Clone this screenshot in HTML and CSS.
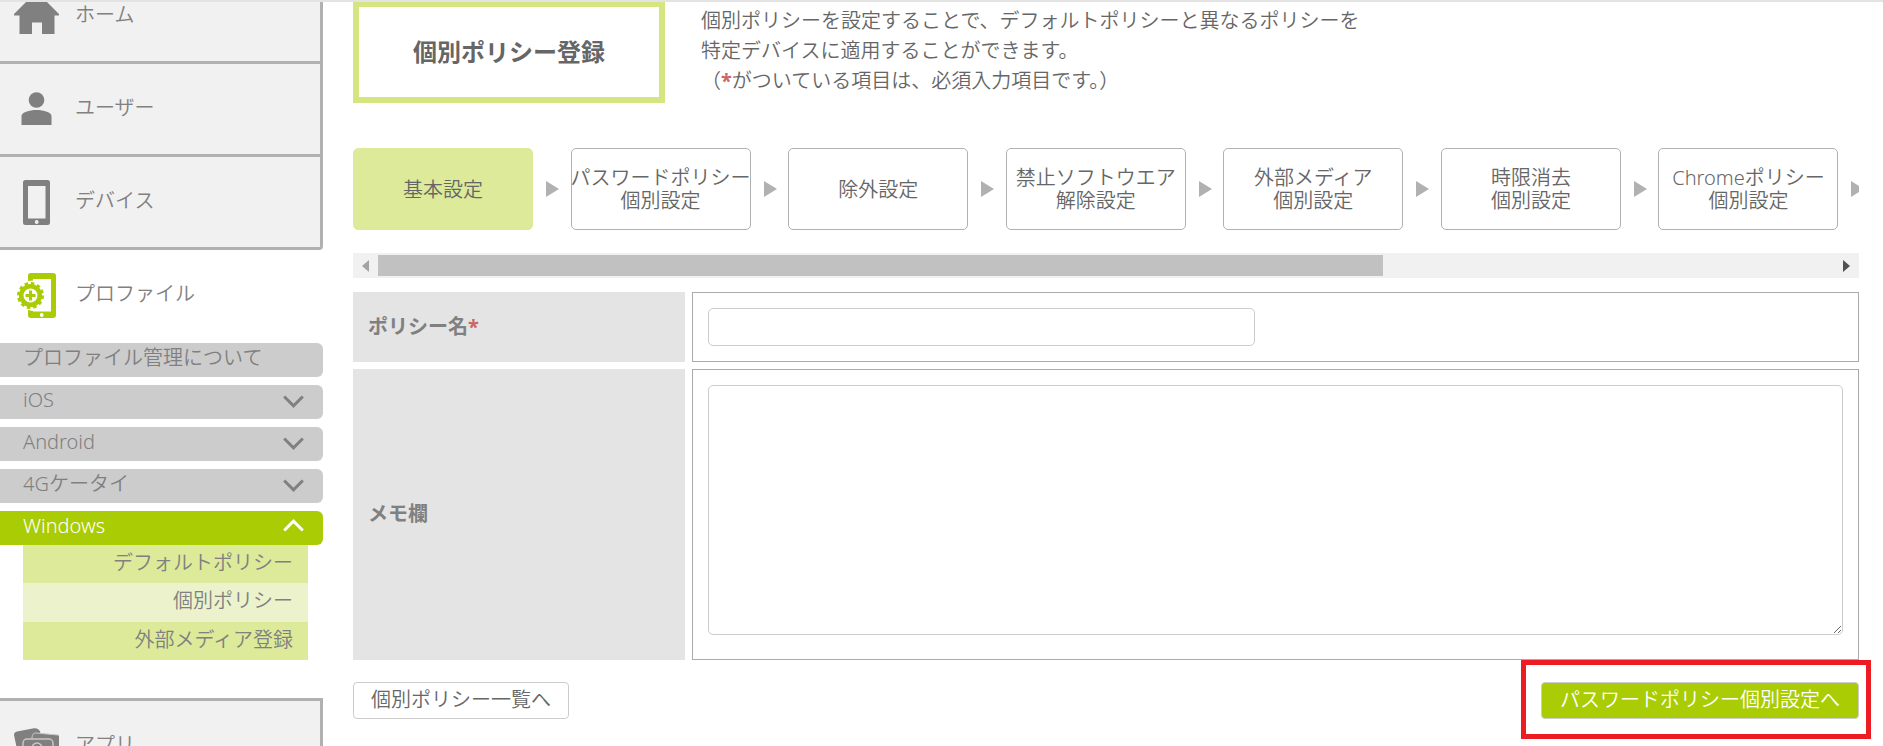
FILE: index.html
```
<!DOCTYPE html>
<html lang="ja">

<head>
    <meta charset="UTF-8">
    <meta name="viewport" content="width=device-width, initial-scale=1.0">
    <title>個別ポリシー登録</title>
    <link rel="stylesheet" href="styles.css">
</head>

<body>
    <div class="topbar"></div>
    <div class="layout">
        <nav class="sidebar">
            <a class="nav-item" href="#">
                <svg class="nav-icon" viewBox="0 0 45 45" fill="#808080">
                    <path d="M18 2h9l18 18v1.500h-4.500V40H28V28.500H18V40H5.500V21.500H0V20z"/>
                </svg>
                <span>ホーム</span>
            </a>
            <a class="nav-item" href="#">
                <svg class="nav-icon" viewBox="0 0 45 45" fill="#808080">
                    <circle cx="22.500" cy="13" r="7.800"/>
                    <path d="M7.500 38V29c0-3.500 7.500-6 15-6s15 2.500 15 6v9z"/>
                </svg>
                <span>ユーザー</span>
            </a>
            <a class="nav-item nav-item-last" href="#">
                <svg class="nav-icon" viewBox="0 0 45 45">
                    <path fill="#808080" fill-rule="evenodd" d="M11.500 0h22a2.500 2.500 0 0 1 2.500 2.500v40a2.500 2.500 0 0 1-2.500 2.500h-22A2.500 2.500 0 0 1 9 42.500v-40A2.500 2.500 0 0 1 11.500 0zM14 6v32.500h17.500V6z"/>
                    <circle cx="22.700" cy="42" r="1.900" fill="#f1f1f1"/>
                </svg>
                <span>デバイス</span>
            </a>
            <a class="nav-item nav-item-open" href="#">
                <svg class="nav-icon" viewBox="0 0 45 45">
                    <path fill="#a9cc04" d="M17 0h22a3 3 0 0 1 3 3v39a3 3 0 0 1-3 3H17a3 3 0 0 1-3-3v-5l5 1v.5h18V6H19v1.500l-5 .5V3a3 3 0 0 1 3-3z"/>
                    <circle cx="27.700" cy="42" r="1.900" fill="#fff"/>
                    <circle cx="16.500" cy="22.500" r="9.300" fill="none" stroke="#a9cc04" stroke-width="4.600"/>
                    <circle cx="16.500" cy="22.500" r="11.800" fill="none" stroke="#a9cc04" stroke-width="3.400" stroke-dasharray="3.400 2.780"/>
                    <path d="M16.500 17.500v10M11.500 22.500h10" stroke="#a9cc04" stroke-width="3"/>
                </svg>
                <span>プロファイル</span>
            </a>

            <div class="submenu">
                <a class="menu-bar" href="#">プロファイル管理について</a>
                <button class="menu-bar" type="button">iOS
                    <svg class="chevron" viewBox="0 0 21 13"><path d="M1.200 1.500l9.300 9.300 9.300-9.300"/></svg>
                </button>
                <button class="menu-bar" type="button">Android
                    <svg class="chevron" viewBox="0 0 21 13"><path d="M1.200 1.500l9.300 9.300 9.300-9.300"/></svg>
                </button>
                <button class="menu-bar" type="button">4Gケータイ
                    <svg class="chevron" viewBox="0 0 21 13"><path d="M1.200 1.500l9.300 9.300 9.300-9.300"/></svg>
                </button>
                <button class="menu-bar active" type="button">Windows
                    <svg class="chevron" viewBox="0 0 21 13"><path d="M1.200 11.500l9.300-9.300 9.300 9.300"/></svg>
                </button>
            </div>
            <div class="policy-list">
                <a href="#">デフォルトポリシー</a>
                <a class="current" href="#">個別ポリシー</a>
                <a href="#">外部メディア登録</a>
            </div>

            <a class="nav-item nav-item-first" href="#">
                <svg class="nav-icon" viewBox="0 0 45 45">
                    <path fill="#808080" d="M0 11q0-3 3-3.600L20 4.200q4-.5 6 3L33 34 6 39z"/>
                    <path fill="#808080" stroke="#c8c8c8" d="M18 14q0-5 4-5l22 2q2 0 2 3v30H18z"/>
                    <rect x="9" y="15" width="30" height="28" rx="4" fill="#808080" stroke="#c8c8c8" stroke-width="1.500"/>
                    <circle cx="23" cy="24" r="5" fill="none" stroke="#c8c8c8" stroke-width="1.500"/>
                </svg>
                <span>アプリ</span>
            </a>
        </nav>

        <main class="content">
            <header class="page-head">
                <h1>個別ポリシー登録</h1>
                <p>個別ポリシーを設定することで、デフォルトポリシーと異なるポリシーを<br>特定デバイスに適用することができます。<br>（<span class="required">*</span>がついている項目は、必須入力項目です。）</p>
            </header>

            <div class="steps">
                <ol class="step-list">
                    <li><a class="step active" href="#">基本設定</a></li>
                    <li><a class="step" href="#">パスワードポリシー<br>個別設定</a></li>
                    <li><a class="step" href="#">除外設定</a></li>
                    <li><a class="step" href="#">禁止ソフトウエア<br>解除設定</a></li>
                    <li><a class="step" href="#">外部メディア<br>個別設定</a></li>
                    <li><a class="step" href="#">時限消去<br>個別設定</a></li>
                    <li><a class="step" href="#">Chromeポリシー<br>個別設定</a></li>
                </ol>
            </div>
            <div class="scrollbar">
                <button class="scroll-btn" type="button" aria-label="左へ">
                    <svg viewBox="0 0 7 12" fill="#a3a3a3"><path d="M7 0v12L0 6z"/></svg>
                </button>
                <div class="scroll-track"><div class="scroll-thumb"></div></div>
                <button class="scroll-btn" type="button" aria-label="右へ">
                    <svg viewBox="0 0 7 12" fill="#505050"><path d="M0 0v12l7-6z"/></svg>
                </button>
            </div>

            <form>
                <table class="form-table">
                    <tr>
                        <th><label for="policyName">ポリシー名<span class="required">*</span></label></th>
                        <td><input type="text" id="policyName"></td>
                    </tr>
                    <tr class="memo-row">
                        <th><label for="memo">メモ欄</label></th>
                        <td><textarea id="memo"></textarea></td>
                    </tr>
                </table>
                <div class="actions">
                    <button class="btn" type="button">個別ポリシー一覧へ</button>
                    <div class="highlight">
                        <button class="btn btn-next" type="submit">パスワードポリシー個別設定へ</button>
                    </div>
                </div>
            </form>
        </main>
    </div>
</body>

</html>
```
FILE: styles.css
```
* {
    box-sizing: border-box;
}

body {
    margin: 0;
    height: 100vh;
    overflow: hidden;
    display: flex;
    flex-direction: column;
    font-family: "Noto Sans", "Noto Sans CJK JP", sans-serif;
    font-size: 20px;
    font-weight: 350;
    color: #666;
    background: #fff;
}

a {
    color: inherit;
    text-decoration: none;
}

button,
input,
textarea {
    font-family: inherit;
    font-size: inherit;
    font-weight: inherit;
    color: inherit;
}

.topbar {
    flex: none;
    height: 2px;
    background: #e3e3e3;
}

.layout {
    flex: 1;
    min-height: 0;
    display: flex;
    overflow: hidden;
}

/* sidebar, scrolled down a little */
.sidebar {
    flex: none;
    width: 323px;
    margin-top: -31px;
    color: #808080;
}

.nav-item {
    display: flex;
    align-items: center;
    gap: 16px;
    height: 93px;
    padding-left: 14px;
    background: #f1f1f1;
    border-right: 3px solid #b1b1b1;
    border-bottom: 3px solid #b1b1b1;
}

.nav-item span {
    padding-bottom: 2px;
    line-height: 28px;
}

.nav-item-last {
    border-bottom-right-radius: 4px;
}

.nav-item-open {
    background: #fff;
    border-color: transparent;
}

.nav-item-first {
    height: 96px;
    margin-top: 38px;
    border-top: 3px solid #b1b1b1;
}

.nav-icon {
    width: 45px;
    height: 45px;
}

.submenu {
    display: flex;
    flex-direction: column;
    gap: 8px;
}

.menu-bar {
    display: flex;
    justify-content: space-between;
    width: 100%;
    height: 34px;
    padding: 0 19px 4px 23px;
    border: none;
    border-radius: 0 6px 6px 0;
    background: #ccc;
    line-height: 30px;
    text-align: left;
    cursor: pointer;
}

.menu-bar.active {
    background: #a9cc04;
    color: #fff;
}

.chevron {
    width: 21px;
    height: 13px;
    margin-top: 10px;
    fill: none;
    stroke: currentColor;
    stroke-width: 3;
}

.menu-bar.active .chevron {
    margin-top: 8px;
}

.policy-list {
    margin: 0 15px 0 23px;
}

.policy-list a {
    display: block;
    height: 38px;
    padding-right: 15px;
    background: #dcea9a;
    line-height: 35px;
    text-align: right;
}

.policy-list a.current {
    height: 39px;
    background: #ecf3cc;
}

/* main area */
.content {
    flex: 1;
    min-width: 0;
    padding: 0 24px 0 30px;
}

.page-head {
    display: flex;
    gap: 36px;
    margin: -1px 0 45px;
}

.page-head h1 {
    flex: none;
    width: 312px;
    height: 102px;
    margin: 0;
    border: 6px solid #d5e57f;
    font-size: 24px;
    line-height: 90px;
    text-align: center;
}

.page-head p {
    margin: 0;
    padding-top: 5px;
    line-height: 30px;
}

.required {
    color: #c66;
    font-weight: bold;
}

.steps {
    overflow: hidden;
    margin-bottom: 23px;
}

.step-list {
    display: flex;
    width: 1523px;
    margin: 0;
    padding: 0;
    list-style: none;
}

.step-list li {
    flex: 1;
    display: flex;
    align-items: center;
    gap: 13px;
}

/* arrow between the steps */
.step-list li::after {
    content: "";
    border-left: 13px solid #b1b1b1;
    border-top: 8px solid transparent;
    border-bottom: 8px solid transparent;
}

.step {
    display: flex;
    flex: none;
    align-items: center;
    justify-content: center;
    width: 180px;
    height: 82px;
    border: 1px solid #b1b1b1;
    border-radius: 5px;
    line-height: 23px;
    text-align: center;
    white-space: nowrap;
}

.step.active {
    border-color: #dcea9a;
    background: #dcea9a;
}

.scrollbar {
    display: flex;
    height: 25px;
    margin-bottom: 14px;
    background: #f1f1f1;
}

.scroll-btn {
    display: flex;
    align-items: center;
    justify-content: center;
    width: 25px;
    padding: 0;
    border: none;
    background: none;
}

.scroll-btn svg {
    width: 7px;
    height: 12px;
}

.scroll-track {
    flex: 1;
    padding: 2px 0;
}

.scroll-thumb {
    width: 69%;
    height: 21px;
    background: #c1c1c1;
}

.form-table {
    width: calc(100% + 14px);
    margin: -7px;
    border-spacing: 7px;
}

.form-table th {
    width: 332px;
    padding: 0 15px 4px;
    background: #e4e4e4;
    color: #808080;
    text-align: left;
}

.form-table td {
    height: 70px;
    padding: 15px;
    border: 1px solid #aaa;
    vertical-align: top;
}

.form-table .memo-row td {
    height: 291px;
}

.form-table input,
.form-table textarea {
    display: block;
    border: 1px solid #ccc;
    border-radius: 5px;
    background: #fff;
}

.form-table input {
    width: 547px;
    max-width: 100%;
    height: 38px;
    padding: 0 10px;
}

.form-table textarea {
    width: 100%;
    height: 250px;
    padding: 10px;
    resize: both;
}

.actions {
    display: flex;
    justify-content: space-between;
    padding-top: 22px;
}

.btn {
    display: block;
    height: 37px;
    padding: 0 17px 2px;
    border: 1px solid #ccc;
    border-radius: 4px;
    background: #fff;
    line-height: 33px;
    cursor: pointer;
}

.btn-next {
    padding: 0 18px 2px;
    background: #a9cc04;
    color: #fff;
}

.highlight {
    position: relative;
}

/* red frame around the next button */
.highlight::after {
    content: "";
    position: absolute;
    inset: -22px -12px -20px -20px;
    border: 5px solid #ed1c24;
    pointer-events: none;
}
```
